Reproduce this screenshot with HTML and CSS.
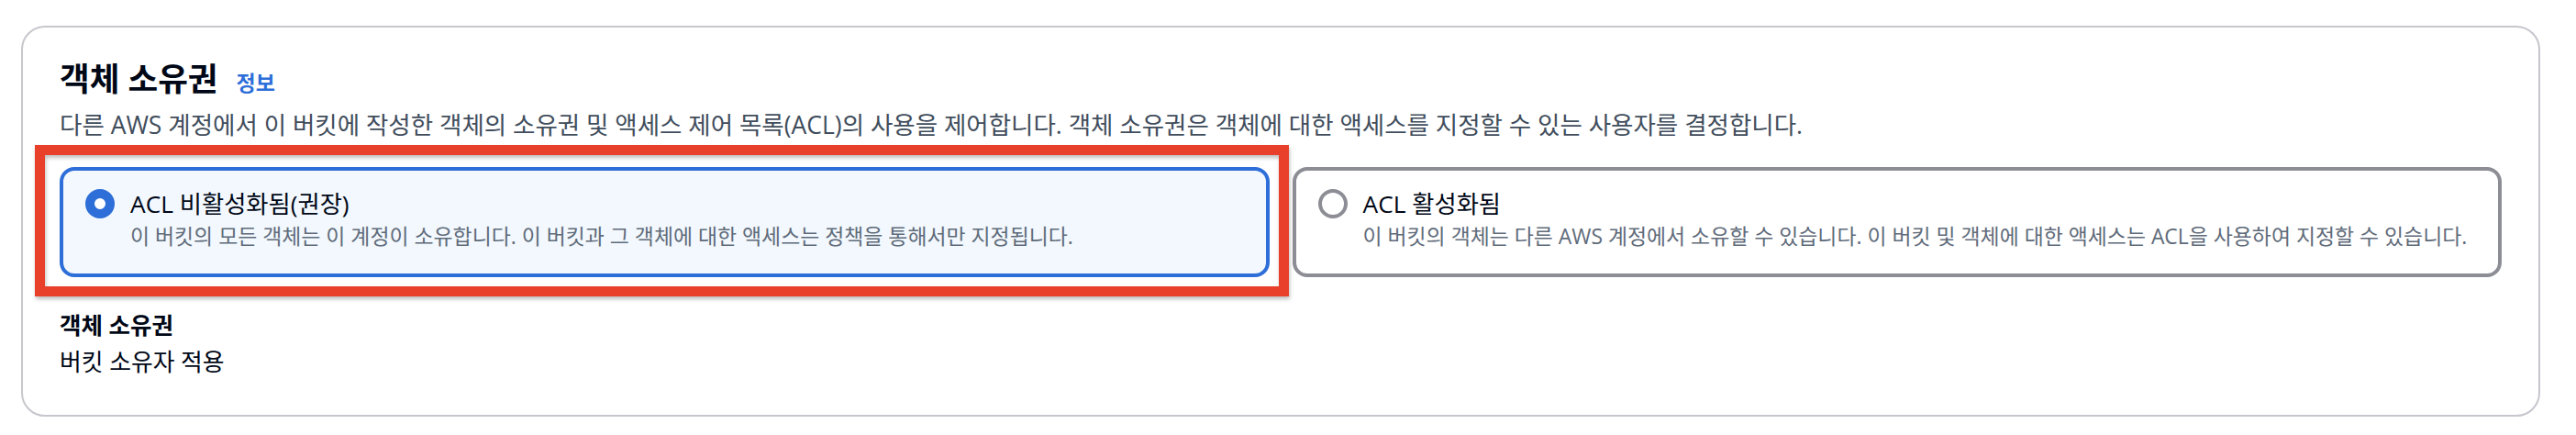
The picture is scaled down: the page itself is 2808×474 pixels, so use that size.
FILE: index.html
```html
<!DOCTYPE html>
<html lang="ko">
<head>
    <meta charset="UTF-8">
    <meta name="viewport" content="width=device-width, initial-scale=1.0">
    <title>객체 소유권</title>
    <link rel="stylesheet" href="styles.css">
</head>
<body>
    <div class="container">
        <h2 class="title">객체 소유권<a class="info" href="#">정보</a></h2>
        <p class="desc">다른 AWS 계정에서 이 버킷에 작성한 객체의 소유권 및 액세스 제어 목록(ACL)의 사용을 제어합니다. 객체 소유권은 객체에 대한 액세스를 지정할 수 있는 사용자를 결정합니다.</p>
        <div class="tiles">
            <div class="tile selected">
                <span class="radio"></span>
                <div class="tile-text">
                    <div class="tile-label">ACL 비활성화됨(권장)</div>
                    <div class="tile-desc">이 버킷의 모든 객체는 이 계정이 소유합니다. 이 버킷과 그 객체에 대한 액세스는 정책을 통해서만 지정됩니다.</div>
                </div>
                <div class="mark"></div>
            </div>
            <div class="tile">
                <span class="radio"></span>
                <div class="tile-text">
                    <div class="tile-label">ACL 활성화됨</div>
                    <div class="tile-desc">이 버킷의 객체는 다른 AWS 계정에서 소유할 수 있습니다. 이 버킷 및 객체에 대한 액세스는 ACL을 사용하여 지정할 수 있습니다.</div>
                </div>
            </div>
        </div>
        <div class="field-label">객체 소유권</div>
        <div class="field-value">버킷 소유자 적용</div>
    </div>
</body>
</html>
```

FILE: styles.css
```css
*, *:before, *:after {
    box-sizing: border-box;
}
body {
    margin: 0;
    padding: 28px 0 0 23px;
    background: white;
    font-family: "Open Sans", "Noto Sans CJK KR", sans-serif;
    color: #000716;
}
.container {
    width: 2746px;
    border: 2px solid #c6c6cd;
    border-radius: 26px;
    padding: 33px 40px 41px 40px;
}
.title {
    margin: 0;
    font-size: 35.5px;
    line-height: 44px;
    font-weight: 700;
}
.info {
    margin-left: 20px;
    font-size: 23px;
    font-weight: 700;
    color: #2d6ed8;
    text-decoration: none;
}
.desc {
    margin: 7px 0 0 0;
    font-size: 26.5px;
    line-height: 34px;
    color: #414d5c;
}
.tiles {
    display: flex;
    gap: 25px;
    margin-top: 29px;
}
.tile {
    position: relative;
    flex: 1;
    display: flex;
    align-items: flex-start;
    gap: 17px;
    height: 120px;
    padding: 19px 24px 0 24px;
    border: 4px solid #8d8d95;
    border-radius: 16px;
    background: white;
}
.tile.selected {
    border-color: #2d6ed8;
    background: #f2f8fd;
}
.radio {
    flex: none;
    width: 32px;
    height: 32px;
    margin-top: 1px;
    border: 4px solid #8d8d95;
    border-radius: 50%;
    background: white;
}
.selected .radio {
    border: 10px solid #2d6ed8;
}
.tile-label {
    font-size: 26.3px;
    line-height: 34px;
    color: #000716;
}
.tile-desc {
    margin-top: 4px;
    font-size: 22.9px;
    line-height: 30px;
    color: #5f6b7a;
}
/* annotation box drawn over the selected tile */
.mark {
    position: absolute;
    top: -28px;
    left: -31px;
    right: -25px;
    bottom: -25px;
    border: 11px solid #e8402a;
    box-shadow: 1px 3px 4px rgba(0, 0, 0, 0.25), inset 1px 3px 4px rgba(0, 0, 0, 0.25);
    pointer-events: none;
}
.field-label {
    margin-top: 35px;
    font-size: 25.5px;
    line-height: 34px;
    font-weight: 700;
}
.field-value {
    margin-top: 6px;
    font-size: 25.8px;
    line-height: 34px;
}
```
